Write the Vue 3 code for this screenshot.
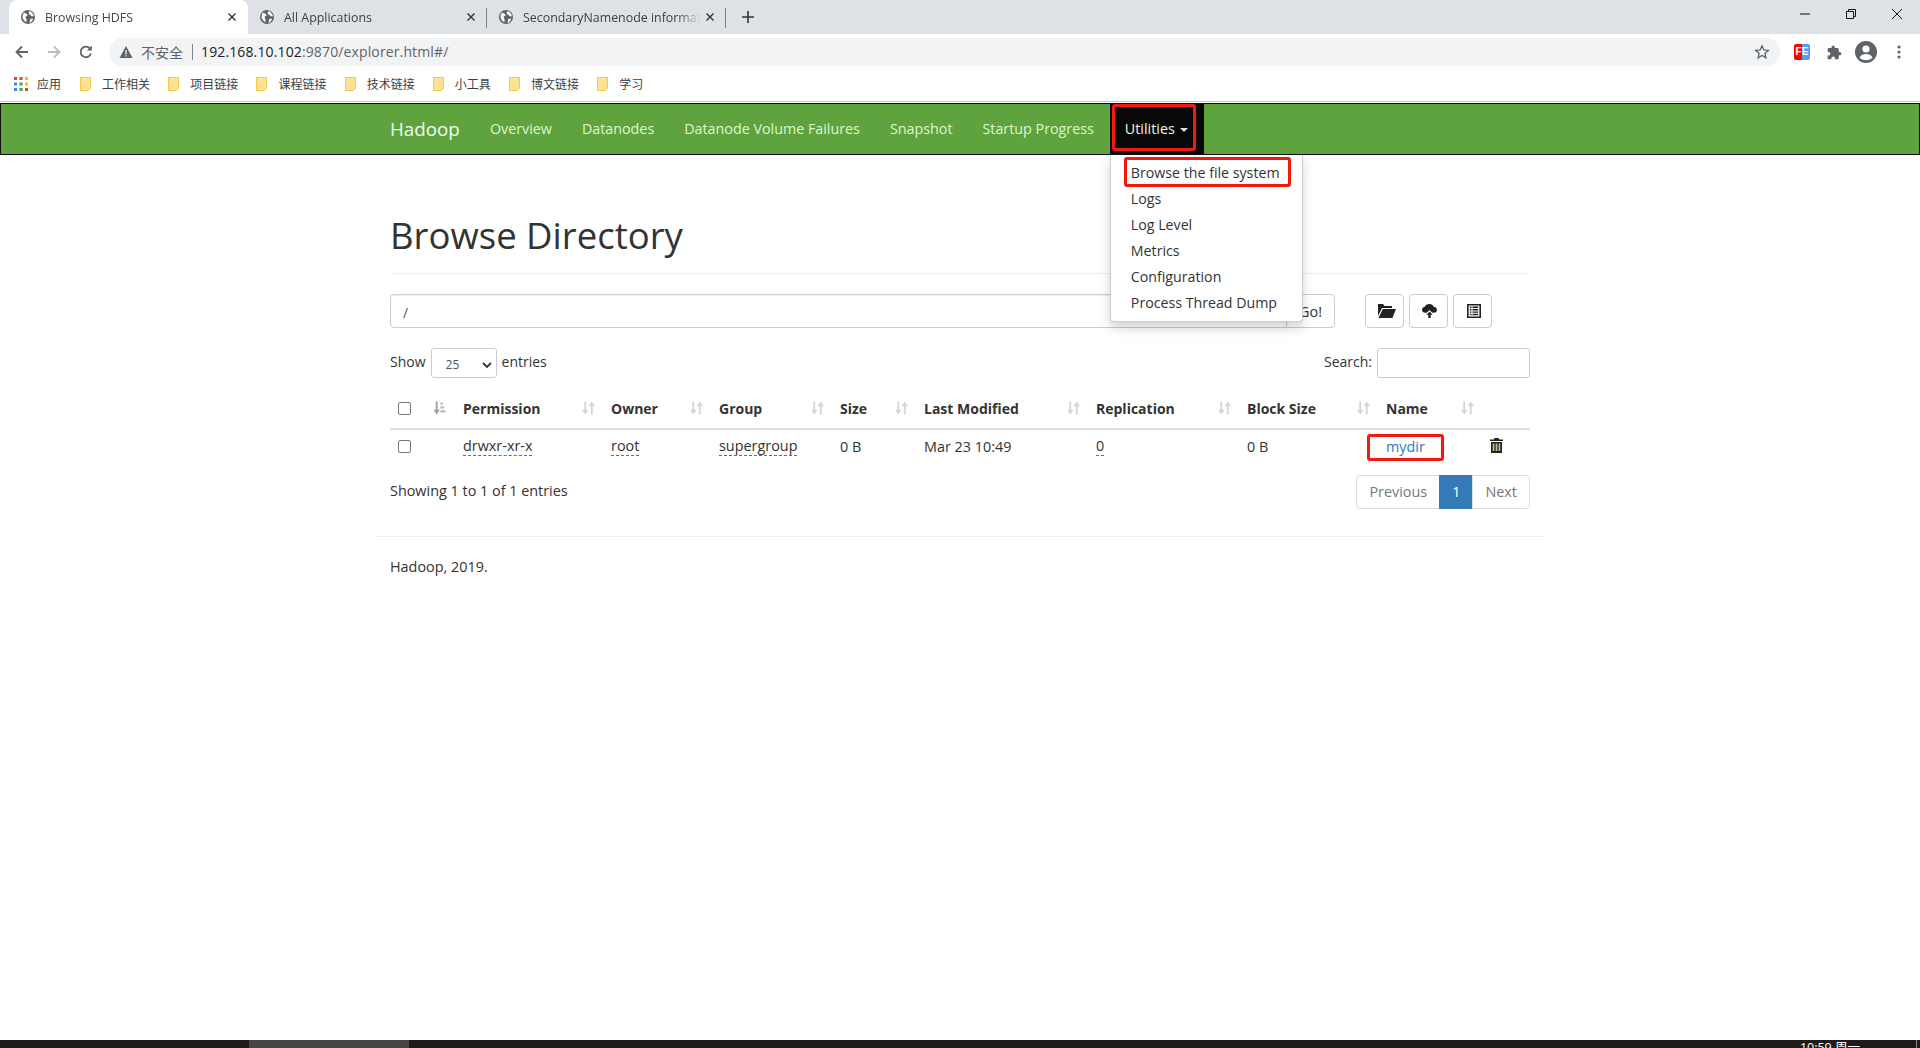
<script setup>
const tabs = [
  { t: 'Browsing HDFS', active: true },
  { t: 'All Applications' },
  { t: 'SecondaryNamenode informat' }
]
const marks = ['工作相关', '项目链接', '课程链接', '技术链接', '小工具', '博文链接', '学习']
const nav = ['Overview', 'Datanodes', 'Datanode Volume Failures', 'Snapshot', 'Startup Progress']
const menu = ['Browse the file system', 'Logs', 'Log Level', 'Metrics', 'Configuration', 'Process Thread Dump']
const cols = [
  { n: 'Permission', w: 148 }, { n: 'Owner', w: 108 }, { n: 'Group', w: 121 }, { n: 'Size', w: 84 },
  { n: 'Last Modified', w: 172 }, { n: 'Replication', w: 151 }, { n: 'Block Size', w: 139 }, { n: 'Name', w: 104 }
]
</script>

<template>
  <div class="page">
    <div class="tabstrip">
      <div v-for="tab in tabs" :key="tab.t" class="tab" :class="{ active: tab.active }">
        <svg class="globe" viewBox="0 0 16 16"><circle cx="8" cy="8" r="8" fill="#5f6368"/><path d="M3 3c2 0 3 1 4 2s0 2-1 2-1 2 0 3 0 3 0 4C3 12 1 9 2 6zM10 1c2 1 4 3 5 6h-3c-1-1-1-2-2-2s-2-2 0-4zM11 10h3c-1 2-2 4-4 5 0-2 0-4 1-5z" fill="#fff"/></svg>
        <span class="tabtitle">{{ tab.t }}</span>
        <svg class="x" viewBox="0 0 10 10"><path d="M1.5 1.5l7 7M8.5 1.5l-7 7" stroke="#333" stroke-width="1.4"/></svg>
      </div>
      <svg class="plus" viewBox="0 0 12 12"><path d="M6 0v12M0 6h12" stroke="#333" stroke-width="1.6"/></svg>
      <div class="grow"></div>
      <div class="win">
        <svg viewBox="0 0 10 10"><path d="M0 5h10" stroke="#111"/></svg>
        <svg viewBox="0 0 10 10"><path d="M.5 2.500h7v7h-7zM2.500 2.500V.5h7v7H7.500" fill="none" stroke="#111"/></svg>
        <svg viewBox="0 0 10 10"><path d="M0 0l10 10M10 0L0 10" stroke="#111"/></svg>
      </div>
    </div>
    <div class="toolbar">
      <svg class="tool" viewBox="0 0 16 16"><path d="M14 8H3M8 2.500 2.500 8 8 13.500" fill="none" stroke="#5f6368" stroke-width="1.800"/></svg>
      <svg class="tool" viewBox="0 0 16 16"><path d="M2 8h11M8 2.500 13.500 8 8 13.500" fill="none" stroke="#b9bcc0" stroke-width="1.800"/></svg>
      <svg class="tool" viewBox="0 0 16 16"><path d="M13 9.500A5.300 5.300 0 1 1 12 4.500" fill="none" stroke="#5f6368" stroke-width="1.800"/><path d="M13.800 1.500v5h-5z" fill="#5f6368"/></svg>
      <div class="omni">
        <svg class="warn" viewBox="0 0 14 14"><path d="M7 1l6.500 12H.5z" fill="#5f6368"/><path d="M6.400 5h1.200v4.500H6.400zM6.400 10.300h1.200v1.200H6.400z" fill="#fff"/></svg>
        <span class="insecure">不安全</span>
        <span class="omnisep"></span>
        <span class="url"><b>192.168.10.102</b>:9870/explorer.html#/</span>
        <div class="grow"></div>
        <svg class="star" viewBox="0 0 16 16"><path d="M8 1.800l1.800 4.200 4.500.4-3.400 3 1 4.400L8 11.500l-3.900 2.300 1-4.400-3.400-3 4.500-.4z" fill="none" stroke="#5f6368" stroke-width="1.300"/></svg>
      </div>
      <div class="fe"><span>FE</span></div>
      <svg class="puzzle" viewBox="1 0.500 23 22.500"><path d="M20.500 11H19V7c0-1.100-.9-2-2-2h-4V3.500C13 2.120 11.880 1 10.500 1S8 2.120 8 3.500V5H4c-1.100 0-1.990.9-1.990 2v3.800H3.500c1.490 0 2.700 1.210 2.700 2.700s-1.210 2.700-2.700 2.700H2V20c0 1.100.9 2 2 2h3.800v-1.500c0-1.490 1.210-2.700 2.700-2.700s2.700 1.210 2.700 2.700V22H17c1.100 0 2-.9 2-2v-4h1.500c1.380 0 2.500-1.120 2.500-2.500S21.880 11 20.500 11z" fill="#5f6368"/></svg>
      <svg class="avatar" viewBox="0 0 22 22"><circle cx="11" cy="11" r="11" fill="#5f6368"/><circle cx="11" cy="8" r="3.600" fill="#fff"/><path d="M4.500 16.500c1.500-3 4-3.500 6.500-3.500s5 .5 6.500 3.500c-3 3.500-10 3.500-13 0z" fill="#fff"/></svg>
      <svg class="dots" viewBox="0 0 4 14"><circle cx="2" cy="2" r="1.600" fill="#5f6368"/><circle cx="2" cy="7" r="1.600" fill="#5f6368"/><circle cx="2" cy="12" r="1.600" fill="#5f6368"/></svg>
    </div>
    <div class="bookmarks">
      <svg class="apps" viewBox="0 0 14 14">
        <g v-for="(c, i) in ['#ea4335','#ea4335','#fbbc05','#4285f4','#34a853','#fbbc05','#4285f4','#34a853','#ea4335']" :key="i">
          <rect :x="(i % 3) * 5.500" :y="Math.floor(i / 3) * 5.500" width="3" height="3" :fill="c"/>
        </g>
      </svg>
      <span class="mark first">应用</span>
      <span v-for="m in marks" :key="m" class="mark">
        <svg class="folder" viewBox="0 0 11 14"><path d="M.5.500h10v11l-2.500 2h-7.500z" fill="#fde293" stroke="#f2c94c"/></svg>{{ m }}
      </span>
    </div>

    <nav class="navbar">
      <div class="navrow">
        <span class="brand">Hadoop</span>
        <a v-for="n in nav" :key="n" class="navlink">{{ n }}</a>
        <div class="utilwrap">
          <a class="navlink util">Utilities <i class="caret"></i></a>
          <span class="redbox utilbox"></span>
          <div class="dropdown">
            <div v-for="(m, i) in menu" :key="m" class="dditem">
              {{ m }}
              <span v-if="i === 0" class="redbox ddbox"></span>
            </div>
          </div>
        </div>
      </div>
    </nav>

    <main class="container">
      <h1 class="title">Browse Directory</h1>
      <div class="pathrow">
        <div class="pathgroup">
          <input class="pathinput" value="/" />
          <button class="btn go">Go!</button>
        </div>
        <button class="btn icon">
          <svg class="open" viewBox="0 0 19 14"><path d="M1 0h5l1.500 2H15v2H5L1 12zM5.800 5H19l-3.600 9H1.500z" fill="#222"/></svg>
        </button>
        <button class="btn icon">
          <svg class="cloud" viewBox="0 0 15 14"><path d="M7.500 0c2 0 3.500 1.100 4.100 2.700C13.600 2.900 15 4.200 15 5.800c0 1.700-1.400 3-3.200 3h-1.400L7.500 6 4.600 8.800H3.200C1.400 8.800 0 7.500 0 5.800 0 4.300 1.100 3.100 2.700 2.800 3.200 1.100 5.100 0 7.500 0z" fill="#222"/><path d="M7.500 7.500l3.100 3.200H8.700V14H6.300v-3.300H4.400z" fill="#222"/></svg>
        </button>
        <button class="btn icon">
          <svg class="list" viewBox="0 0 14 14"><path d="M.8.800h12.400v12.400H.8z" fill="none" stroke="#222" stroke-width="1.600"/><path d="M2.800 3.300h1.700M2.800 5.700h1.700M2.800 8.100h1.700M2.800 10.500h1.700M5.500 3.300h5.700M5.500 5.700h5.700M5.500 8.100h5.700M5.500 10.500h5.700" stroke="#222" stroke-width="1.400"/></svg>
        </button>
      </div>
      <div class="filters">
        <div class="lenctl"><span class="lbl">Show</span>
          <div class="selectbox"><span>25</span><svg viewBox="0 0 10 6"><path d="M1 1l4 4 4-4" fill="none" stroke="#333" stroke-width="1.800"/></svg></div>
          <span class="lbl">entries</span></div>
        <div class="searchctl"><span class="lbl">Search:</span> <div class="searchbox"></div></div>
      </div>

      <div class="thead">
        <div class="cell chk"><span class="checkbox"></span></div>
        <div class="cell sortfirst">
          <svg class="sort dark" viewBox="0 0 14 14"><path d="M3 0h2v9h2.500L4 14 .5 9H3z" fill="#a0a0a0"/><path d="M8 1h2.500v2.400H8zM8 5.200h4v2.400H8zM8 9.400h5.500v2.400H8z" fill="#b8b8b8"/></svg>
        </div>
        <div v-for="c in cols" :key="c.n" class="cell th" :style="{ width: c.w + 'px' }">
          <span>{{ c.n }}</span>
          <svg class="sort" viewBox="0 0 14 14"><path d="M2.500 0h2v9H7l-3.500 5L0 9h2.500zM9.500 14h2V5H14l-3.500-5L7 5h2.500z" fill="#d6d6d6"/></svg>
        </div>
      </div>
      <div class="trow">
        <div class="cell chk"><span class="checkbox"></span></div>
        <div class="cell sortfirst"></div>
        <div class="cell" style="width:148px"><span class="dash">drwxr-xr-x</span></div>
        <div class="cell" style="width:108px"><span class="dash">root</span></div>
        <div class="cell" style="width:121px"><span class="dash">supergroup</span></div>
        <div class="cell" style="width:84px">0 B</div>
        <div class="cell" style="width:172px">Mar 23 10:49</div>
        <div class="cell" style="width:151px"><span class="dash">0</span></div>
        <div class="cell" style="width:139px">0 B</div>
        <div class="cell namecell" style="width:104px"><a class="link">mydir</a><span class="redbox namebox"></span></div>
        <div class="cell trash">
          <svg viewBox="0 0 13 15"><path d="M4.500 0h4l.7 1.500H13V3H0V1.500h3.800z" fill="#222"/><path d="M1 4h11v11H1z" fill="#222"/><path d="M2.700 5.500h1.700V13H2.700zM5.650 5.500h1.700V13H5.650zM8.600 5.500h1.700V13H8.600z" fill="#cbbd94"/></svg>
        </div>
      </div>
      <div class="infoRow">
        <span class="info">Showing 1 to 1 of 1 entries</span>
        <div class="pager">
          <span class="pg">Previous</span><span class="pg on">1</span><span class="pg">Next</span>
        </div>
      </div>
    </main>
    <div class="footerwrap">
      <hr class="rule" />
      <p class="foot">Hadoop, 2019.</p>
    </div>
    <div class="taskbar">
      <span class="taskitem"></span>
      <div class="grow"></div>
      <span class="clock">10:59 周一</span>
      <span class="taskline"></span>
    </div>
  </div>
</template>

<style>
html, body { margin: 0; height: 100%; overflow: hidden; background: #fff; }
</style>

<style scoped>
.page { width: 1920px; height: 1048px; position: relative; overflow: hidden; display: flex; flex-direction: column; font-family: "Open Sans", "Noto Sans CJK SC", sans-serif; font-size: 14.4px; color: #333; background: #fff; }
.grow { flex: 1; }
.tabstrip { height: 34px; background: #dee1e6; display: flex; align-items: flex-start; padding-left: 9px; box-sizing: border-box; flex: none; }
.tab { width: 239px; height: 34px; display: flex; align-items: center; padding: 0 7px 0 0; box-sizing: border-box; position: relative; border-radius: 8px 8px 0 0; font-size: 12.4px; color: #3c4043; flex: none; }
.tab:not(.active)::after { content: ""; position: absolute; right: 0; top: 8px; height: 20px; width: 1px; background: #80868b; }
.tab.active { background: #fff; color: #45484c; }
.globe { width: 14px; height: 14px; margin-left: 12px; margin-right: 10px; flex: none; }
.tabtitle { flex: 1; min-width: 0; overflow: hidden; white-space: nowrap; -webkit-mask-image: linear-gradient(90deg, #000 86%, transparent); mask-image: linear-gradient(90deg, #000 86%, transparent); }
.x { width: 10px; height: 10px; margin: 0 4px; flex: none; }
.plus { width: 12px; height: 12px; margin: 11px 0 0 16px; flex: none; }
.win { display: flex; gap: 36px; padding: 9px 18px 0 0; }
.win svg { width: 10px; height: 10px; }
.toolbar { height: 34px; display: flex; align-items: center; flex: none; background: #fff; padding: 2px 0 0 14px; box-sizing: border-box; }
.tool { width: 16px; height: 16px; margin-right: 16px; flex: none; }
.tool:nth-child(3) { margin-right: 15px; }
.omni { width: 1671px; height: 28px; border-radius: 14px; background: #f1f3f4; display: flex; align-items: center; box-sizing: border-box; padding: 0 10px; flex: none; }
.warn { width: 14px; height: 14px; flex: none; }
.insecure { margin-left: 8px; font-size: 14px; line-height: 20px; margin-top: -1px; color: #5f6368; font-family: "Noto Sans CJK SC", sans-serif; }
.omnisep { width: 1px; height: 16px; background: #80868b; margin: 0 8.500px; }
.url { font-size: 14px; letter-spacing: .13px; color: #5f6368; margin-top: -1px; }
.url b { font-weight: 400; color: #202124; }
.star { width: 16px; height: 16px; }
.fe { margin-left: 14px; width: 16px; height: 16px; border-radius: 2px; background: linear-gradient(90deg, #f00 50%, #5e97f6 50%); color: #fff; font: 700 10px/16px "Liberation Sans", sans-serif; text-align: center; flex: none; }
.puzzle { width: 15px; height: 15px; margin-left: 17px; flex: none; }
.avatar { width: 22px; height: 22px; margin-left: 13px; flex: none; }
.dots { width: 4px; height: 14px; margin-left: 20px; flex: none; }
.bookmarks { height: 34px; display: flex; align-items: center; flex: none; padding: 0 0 2px 14px; font-size: 12px; color: #3c4043; border-bottom: 1px solid #d0d0d0; box-sizing: border-box; }
.apps { width: 14px; height: 14px; margin-right: 9px; flex: none; }
.mark { display: inline-flex; align-items: center; margin-right: 18.2px; white-space: nowrap; font-family: "Noto Sans CJK SC", sans-serif; }
.mark.first { margin-right: 19px; }
.folder { width: 11px; height: 14px; margin-right: 11px; flex: none; }
.navbar { height: 52px; flex: none; box-sizing: border-box; background: #5fa33e; border: 1px solid #111; margin-top: 1px; font-size: 14.3px; }
.container { width: 1140px; margin: 0 auto; position: relative; }
.navrow { display: flex; height: 50px; padding-left: 389px; }
.brand { font-size: 18.800px; line-height: 50px; color: #f0fff0; margin-right: 15px; }
.navlink { padding: 0 15px; line-height: 50px; color: #dff5d0; white-space: nowrap; display: block; }
.utilwrap { position: relative; margin-left: 1px; }
.util { background: #080808; color: #f0f8e8; width: 94px; box-sizing: border-box; }
.caret { display: inline-block; border-top: 4px solid #ddd; border-left: 4px solid transparent; border-right: 4px solid transparent; vertical-align: middle; margin-left: 2px; }
.redbox { position: absolute; border: 3px solid #f21a0e; border-radius: 3px; box-sizing: border-box; pointer-events: none; }
.utilbox { left: 2px; top: 0; width: 84px; height: 47px; }
.dropdown { position: absolute; left: 0; top: 51px; width: 191px; background: #fff; border: 1px solid #ccc; border-top: 0; border-radius: 0 0 4px 4px; box-shadow: 0 6px 12px rgba(0, 0, 0, .175); padding: 5px 0; z-index: 5; font-size: 14.2px; }
.dditem { position: relative; height: 26px; line-height: 26px; padding-left: 20px; white-space: nowrap; color: #333; }
.ddbox { left: 13px; top: -3px; width: 167px; height: 30px; }
.title { font-size: 36.5px; font-weight: 400; line-height: 40px; color: #333; margin: 60px 0 0; padding: 0 0 18px; border-bottom: 1px solid #eee; }
.pathrow { display: flex; margin-top: 20px; gap: 5px; align-items: stretch; height: 34px; }
.pathgroup { display: flex; width: 945px; margin-right: 25px; }
.pathinput { flex: 1; min-width: 0; border: 1px solid #ccc; border-radius: 4px 0 0 4px; padding: 2px 12px 0; font: 14px "Open Sans", sans-serif; color: #555; outline: none; box-shadow: inset 0 1px 1px rgba(0,0,0,.075); }
.btn { border: 1px solid #ccc; background: #fff; border-radius: 4px; color: #333; font: 14.4px "Open Sans", sans-serif; padding: 0; }
.go { width: 49px; margin-left: -1px; border-radius: 0 4px 4px 0; }
.icon { width: 39px; display: flex; align-items: center; justify-content: center; }
.icon svg { flex: none; }
.icon svg.open { width: 19px; height: 14px; margin-left: 4px; }
.icon svg.cloud { width: 15px; height: 14px; margin-left: 2px; }
.icon svg.list { width: 14px; height: 14px; margin-left: 2px; }
.filters { display: flex; justify-content: space-between; align-items: center; margin-top: 20px; height: 30px; font-size: 14px; }
.lenctl, .searchctl { display: flex; align-items: center; gap: 5px; }
.lbl { margin-top: -3px; }
.selectbox { width: 66px; height: 30px; box-sizing: border-box; border: 1px solid #ccc; border-radius: 3px; display: flex; align-items: center; justify-content: space-between; padding: 3px 4px 0 14px; font-size: 12px; color: #555; }
.selectbox svg { width: 10px; height: 6px; }
.searchbox { width: 153px; height: 30px; box-sizing: border-box; border: 1px solid #ccc; border-radius: 3px; }
.thead, .trow { display: flex; }
.thead { height: 40px; margin-top: 10px; border-bottom: 2px solid #ddd; font-weight: 700; font-size: 14px; box-sizing: content-box; }
.trow { height: 34px; padding-bottom: 1px; box-sizing: border-box; }
.cell { display: flex; align-items: center; box-sizing: border-box; white-space: nowrap; position: relative; }
.chk { padding-left: 8px; box-sizing: content-box; width: 20px; }
.checkbox { width: 13px; height: 13px; box-sizing: border-box; border: 1px solid #767676; border-radius: 2px; background: #fff; }
.sortfirst { width: 45px; }
.sort { width: 13px; height: 14px; position: absolute; left: 0; }
.sortfirst .sort { left: 15px; }
.th span { position: relative; }
.th .sort { left: auto; right: 16px; }
.dash { border-bottom: 1px dashed #337ab7; line-height: 18px; }
.link { color: #337ab7; }
.namecell { justify-content: flex-start; }
.namebox { left: -19px; top: 4px; width: 77px; height: 27px; }
.trash svg { width: 13px; height: 15px; margin-top: -2px; }
.infoRow { display: flex; justify-content: space-between; align-items: flex-start; margin-top: 11px; line-height: 20px; }
.info { padding-top: 6px; }
.pager { display: flex; }
.pg { border: 1px solid #ddd; margin-left: -1px; padding: 6px 12px; color: #777; line-height: 20px; }
.pg:first-child { border-radius: 4px 0 0 4px; }
.pg:last-child { border-radius: 0 4px 4px 0; }
.pg.on { background: #337ab7; border-color: #337ab7; color: #fff; }
.footerwrap { width: 1170px; margin: 0 auto; }
.rule { border: 0; border-top: 1px solid #eee; margin: 27px 0 0; }
.foot { margin: 20px 0 0 15px; line-height: 20px; }
.taskbar { position: absolute; left: 0; right: 0; bottom: 0; height: 8px; background: #1f1b1a; display: flex; color: #fff; font-size: 12.500px; overflow: hidden; }
.taskitem { width: 160px; margin-left: 249px; background: #474544; flex: none; }
.clock { line-height: 16px; margin-right: 56px; white-space: nowrap; }
.taskline { width: 1px; background: #8a8a8a; margin-right: 3px; }
</style>
